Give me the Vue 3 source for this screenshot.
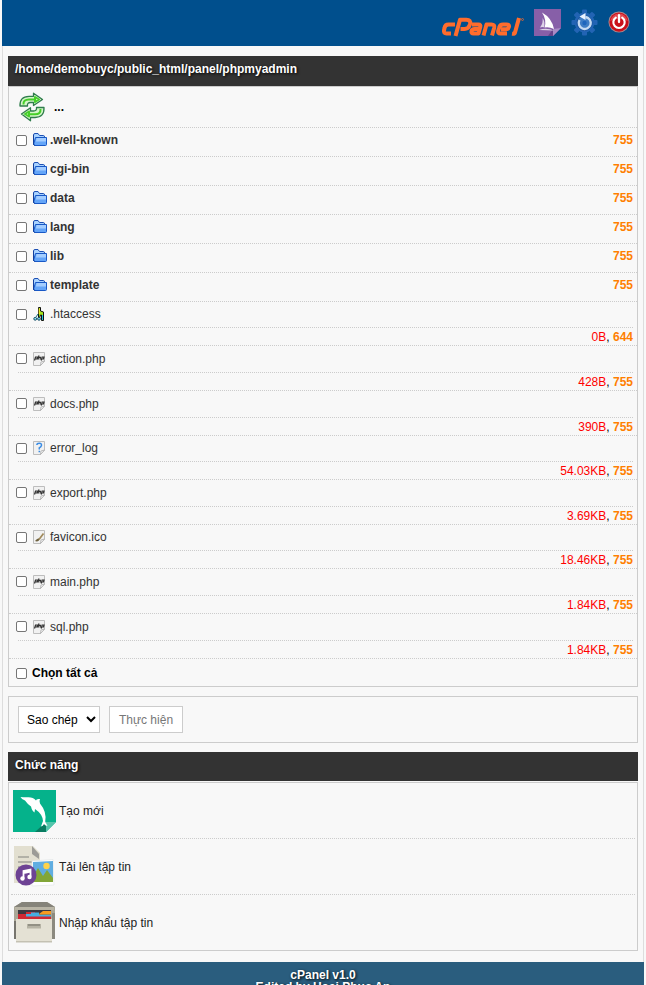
<script setup>
import { ref, watch } from 'vue'

const path = '/home/demobuyc/public_html/panel/phpmyadmin'
const entries = [
  { name: '.well-known', icon: 'folder', mode: '755' },
  { name: 'cgi-bin', icon: 'folder', mode: '755' },
  { name: 'data', icon: 'folder', mode: '755' },
  { name: 'lang', icon: 'folder', mode: '755' },
  { name: 'lib', icon: 'folder', mode: '755' },
  { name: 'template', icon: 'folder', mode: '755' },
  { name: '.htaccess', icon: 'config', size: '0B', mode: '644' },
  { name: 'action.php', icon: 'php', size: '428B', mode: '755' },
  { name: 'docs.php', icon: 'php', size: '390B', mode: '755' },
  { name: 'error_log', icon: 'unknown', size: '54.03KB', mode: '755' },
  { name: 'export.php', icon: 'php', size: '3.69KB', mode: '755' },
  { name: 'favicon.ico', icon: 'image', size: '18.46KB', mode: '755' },
  { name: 'main.php', icon: 'php', size: '1.84KB', mode: '755' },
  { name: 'sql.php', icon: 'php', size: '1.84KB', mode: '755' },
]
const selected = ref([])
const all = ref(false)
const action = ref('Sao chép')
watch(all, (on) => { selected.value = on ? entries.map((e) => e.name) : [] })
</script>

<template>
  <div class="page">
    <header class="top">
      <a href="#" class="brand" aria-label="cPanel">
        <svg width="84" height="20" viewBox="0 0 84 20" fill="none" stroke="#ff6c2c" stroke-width="4" stroke-linejoin="round">
          <path d="M15 7.500H8.500Q5 7.500 4.500 11L4 13.500Q3.500 16.500 6.500 16.500H11" />
          <path d="M15.500 19L20 2.800H26.500Q31 2.800 30 7L29.700 8Q28.500 12 24.500 12H20.500" />
          <path d="M32 7.500H38.500Q41 7.500 40.300 10L38.500 16.500H33.500Q31 16.500 31.500 14.200Q32 12 34.500 12H39" />
          <path d="M43.500 18.500L46.500 7.500H51.500Q55 7.500 54.200 10.700L52 18.500" />
          <path d="M67 16.500H60.500Q57.500 16.500 58.300 13.500L59.200 10.500Q60 7.500 63 7.500H66.500Q69.500 7.500 69 9.800Q68.400 12.200 66 12.200H61" />
          <path d="M79 1L75 15.500Q74.500 17 72 16.700" />
          <circle cx="82.500" cy="2.500" r="1" stroke-width=".7" />
        </svg>
      </a>
      <a href="#" aria-label="phpMyAdmin">
        <svg width="27" height="27" viewBox="0 0 27 27">
          <path d="M0 0H27V19L19 27H0Z" fill="#875fa8" />
          <path d="M27 19L19 27V20Z" fill="#a98bc5" /><path d="M19 20L14 27H19Z" fill="#66438a" />
          <path d="M8 3.500Q18 9 20 20Q15 17.500 10.500 18.500Q13 11 8 3.500Z" fill="#fff" />
          <path d="M8.500 9Q9.500 14 6 18.500Q8 17.500 10 18.300Q11.500 13 8.500 9ZM5 21Q12 18.500 20 21.500Q13 21 5 21Z" fill="#ded4e8" />
        </svg>
      </a>
      <a href="#" aria-label="Cài đặt">
        <svg width="27" height="27" viewBox="0 0 27 27">
          <g fill="#2264b4">
            <rect v-for="n in 4" :key="n" x="11" y="0.500" width="5" height="26" rx="1" :transform="`rotate(${n * 45} 13.500 13.500)`" />
            <circle cx="13.500" cy="13.500" r="10" />
          </g>
          <circle cx="13.500" cy="14" r="7.500" fill="#3f7dc5" stroke="#1c549b" />
          <path d="M8.500 11A6 6 0 1 0 14.500 8" fill="none" stroke="#c6dbf2" stroke-width="2.300" />
          <path d="M8.500 7.500L14.500 4V11Z" fill="#e8f2ff" /><circle cx="13.500" cy="14" r="2.200" fill="#1f66bd" />
        </svg>
      </a>
      <a href="#" aria-label="Đăng xuất">
        <svg width="22" height="22" viewBox="0 0 24 24">
          <circle cx="12" cy="12" r="11.500" fill="#a8898f" /><circle cx="12" cy="12" r="10.500" fill="#c9101a" />
          <path d="M2.500 11A9.600 9.600 0 0 1 21.500 11Q12 6 2.500 11Z" fill="#e0454c" />
          <path d="M8.500 7.200A6.200 6.200 0 1 0 15.500 7.200" fill="none" stroke="#fff" stroke-width="2.300" stroke-linecap="round" />
          <path d="M12 4.500V12" stroke="#fff" stroke-width="2.500" stroke-linecap="round" />
        </svg>
      </a>
    </header>

    <main class="body">
      <section>
        <h1 class="title">{{ path }}</h1>
        <ul class="panel files">
          <li class="up">
            <a href="#">
              <svg width="28" height="30" viewBox="0 0 28 30" fill="#d5f5c9" stroke="#2f7d4c" stroke-width="1.300" stroke-linejoin="round">
                <path d="M2 14Q1.500 4.500 11 4.300H15.500V1.200L24.500 7.500L15.500 13.500V10.500H12.500Q9 10.500 9.500 14Z" />
                <path d="M26 15.500Q26.500 25.300 17 25.500H12.500V28.800L3.500 22L12.500 15.800V19H15.500Q19 19 18.500 15.500Z" />
                <path d="M5.500 12.500Q5 7.500 11 7.500H17V5L21 7.500L17 10V7.500M22.500 17Q23 22.200 17 22.200H11V24.500L7 22L11 19.500V22" fill="none" stroke="#45cf29" stroke-width="2" />
              </svg>
              <b>...</b>
            </a>
          </li>
          <li v-for="e in entries" :key="e.name" :class="e.size ? 'file' : 'dir'">
            <div class="name">
              <input v-model="selected" type="checkbox" :value="e.name" :aria-label="e.name">
              <svg v-if="e.icon === 'folder'" class="icon" width="16" height="16" viewBox="0 0 16 16">
                <path d="M1.500 12.500V3Q1.500 1.500 3 1.500H6L7.500 3.500H11.500Q12.500 3.500 12.500 5V7" fill="#a8d2ff" stroke="#1d50b4" />
                <path d="M1.500 12.500L3.500 5.500H14.500V12.500Q14.500 13.500 13.500 13.500H3Z" fill="#64a5f8" stroke="#1858c6" />
                <path d="M4.500 6H14V9.500H4Z" fill="#a3cdff" />
                <path d="M1.500 3V12.500L3 13.500" fill="none" stroke="#123f9c" />
              </svg>
              <svg v-else-if="e.icon === 'config'" class="icon" width="16" height="16" viewBox="0 0 16 16">
                <path d="M6.500 1.500H8.500V5L11.500 6V14.500H9.500V9H8.500L7.500 12H6.500Z" fill="#a5e51d" stroke="#111" />
                <path d="M7.200 2.500V8" stroke="#ffe92b" /><path d="M10.500 9V14" stroke="#20c3da" />
                <circle cx="3.200" cy="12.800" r="1.400" fill="#8de9f7" stroke="#124860" /><circle cx="7" cy="12.800" r="1.400" fill="#8de9f7" stroke="#124860" />
                <path d="M4 11L6 8" stroke="#1a7185" />
              </svg>
              <svg v-else class="icon" :class="e.icon" width="16" height="16" viewBox="0 0 16 16">
                <path d="M1.500 1.500H12.500V10L8.500 14.500H1.500Z" fill="#f1f1f1" stroke="#bdbdbd" /><path d="M8.500 14.500L9 11L12.500 10Z" fill="#fff" stroke="#aaa" stroke-width=".8" />
                <path v-if="e.icon === 'php'" d="M2.500 9.500L3.500 6H5.500L5 8H3M7 4.500L6 8.500M6.700 6.300H8.500L8 8.500M9.200 9.500L10.200 6H12L11.500 8H9.700" fill="none" stroke="#333" stroke-width="1.200" />
                <path v-if="e.icon === 'unknown'" d="M4.800 5Q5 3.200 7.300 3.200Q9.700 3.200 9.500 5.300Q9.200 6.800 7.300 7.800V9.500M7.300 10.700V12.300" fill="none" stroke="#3a8ce4" stroke-width="1.500" />
                <g v-if="e.icon === 'image'"><path d="M3 12Q4.500 9.500 8 9L7 11.500Q5 13 3 12Z" fill="#6f623f" /><path d="M7 10.500L11.500 4.500" stroke="#a08a5c" stroke-width="1.700" /></g>
              </svg>
              <a href="#">{{ e.name }}</a>
              <a v-if="!e.size" href="#" class="mode end">{{ e.mode }}</a>
            </div>
            <div v-if="e.size" class="meta"><span class="size">{{ e.size }}</span>, <a href="#" class="mode">{{ e.mode }}</a></div>
          </li>
          <li class="all">
            <label class="name"><input v-model="all" type="checkbox"> <b>Chọn tất cả</b></label>
          </li>
        </ul>
      </section>

      <form class="panel bulk" @submit.prevent>
        <select v-model="action" aria-label="Thao tác">
          <option>Sao chép</option>
          <option>Di chuyển</option>
          <option>Xóa</option>
        </select>
        <button type="submit">Thực hiện</button>
      </form>

      <section class="functions">
        <h2 class="title">Chức năng</h2>
        <ul class="panel menu">
          <li>
            <a href="#">
              <svg width="44" height="44" viewBox="0 0 44 44">
                <path d="M0 1H43V33L33 43H0Z" fill="#05b28b" /><path d="M43 33L33 43V33Z" fill="#55c5ab" /><path d="M33 33V43H22Z" fill="#087b60" />
                <path d="M7.500 8Q12 8.500 15 8.200Q20 8 23 11.500Q23 9.500 27 10Q26 12 27 14.500Q34 23 32.200 32.500L34.500 37Q31.500 36.500 31 35Q30 37 28 37.500L30 32Q29.500 25 22 20L21.500 23.500Q19 22 18 17.500Q14 14.500 12 11.500Q9 11 7.500 8Z" fill="#fff" />
              </svg>
              Tạo mới
            </a>
          </li>
          <li>
            <a href="#">
              <svg width="44" height="44" viewBox="0 0 44 44">
                <path d="M1 1H20L27 8V38H1Z" fill="#e2dfd0" /><path d="M19 1L26 9V14L19 9Z" fill="#9c9b96" />
                <path d="M5 12H16M5 17H21M5 22H18M5 27H17" stroke="#a3a299" stroke-width="1.600" />
                <path d="M19 16L40 14.500L41 40L19 41Z" fill="#fff" stroke="#e1e5e7" stroke-width=".7" />
                <path d="M20 17L40 16V36H20Z" fill="#60ade1" /><circle cx="33.500" cy="21" r="3.200" fill="#ffd24a" />
                <path d="M19 33L25 23L30 31L34 25L40 33V37H19Z" fill="#82a638" />
                <circle cx="13" cy="30" r="10.500" fill="#6d4294" />
                <path d="M10.500 33V26L17.500 24.500V31.500M10.500 28L17.500 26.500" fill="none" stroke="#fff" stroke-width="1.800" /><circle cx="9.500" cy="33.500" r="2.200" fill="#fff" /><circle cx="16.500" cy="32" r="2.200" fill="#fff" />
              </svg>
              Tải lên tập tin
            </a>
          </li>
          <li>
            <a href="#">
              <svg width="44" height="44" viewBox="0 0 44 44">
                <path d="M1 6L9 1H34L42 6V38H39V41H4V38H1Z" fill="#aaa797" /><path d="M1 6L9 1H34L42 6Z" fill="#85837a" />
                <path d="M2 6H41V9H2Z" fill="#b9b5a6" /><path d="M5 9H38V18H5Z" fill="#3c3941" />
                <path d="M5 13H13V11H22V15H38V18H5Z" fill="#cf2934" /><path d="M13 13H18V11.500H26V13.500H38V15.500H13Z" fill="#46aee0" /><path d="M26 13L30 10H38V13.500H26Z" fill="#f79b20" />
                <path d="M3 18H39V40H3Z" fill="#e4e1d4" /><path d="M1 20H3V38H1Z" fill="#77756e" /><path d="M39 12H42V38H39Z" fill="#8c8a80" />
                <path d="M14 23H28V27.500H14Z" fill="#b6b3a5" /><path d="M15 23H27V25H15Z" fill="#929084" /><path d="M3 40H39V41.500H3Z" fill="#c4c1b3" />
              </svg>
              Nhập khẩu tập tin
            </a>
          </li>
        </ul>
      </section>
    </main>

    <footer class="foot">
      <div>cPanel v1.0</div>
      <div>Edited by Hoai Phuc An</div>
    </footer>
  </div>
</template>

<style>
body { background: #f8f8f8; }
html { scrollbar-width: none; }
</style>

<style scoped>
.page { margin: 0 2px; font: 12px/14px "Liberation Sans", Arial, sans-serif; color: #000; height: 100vh; overflow: hidden; display: flex; flex-direction: column; }
a { color: #333; text-decoration: none; }
svg { display: block; flex: none; }
.top { flex: none; height: 46px; box-sizing: border-box; background: #004f8d; display: flex; align-items: center; justify-content: flex-end; gap: 10px; padding: 0 14px 2px 0; }
.brand { padding-top: 10px; }
.body { flex: none; border: 1px solid #ddd; border-width: 0 1px; padding: 10px 5px 11px; display: flex; flex-direction: column; gap: 9px; }
.title { margin: 0; padding: 6px 7px 10px; background: #333; color: #fff; font-size: 12px; line-height: 14px; text-shadow: 1px 1px 3px #000; }
.functions .title { padding-bottom: 9px; margin-bottom: 1px; }
.panel { margin: 0; padding: 0; border: 1px solid #ccc; list-style: none; }
.files li + li, .menu li + li { border-top: 1px dotted #ccc; }
.up a { display: flex; align-items: center; gap: 8px; padding: 5px 9px; color: #000; }
.name { display: flex; align-items: center; padding: 0 4px 0 7px; }
.name input { width: 11px; height: 11px; margin: 0 5px 0 0; flex: none; appearance: none; background: #fff; border: 1px solid #767676; border-radius: 2px; }
.name input:checked { background: #0075ff; }
.icon { margin-right: 2px; }
.php { padding-top: 1px; }
.end { margin-left: auto; }
.dir .name { padding-top: 4px; padding-bottom: 8px; font-weight: bold; }
.file .name { padding-top: 4px; padding-bottom: 5px; }
.meta { margin: 0 4px 0 9px; padding-top: 2px; line-height: 15px; border-top: 1px dotted #ccc; text-align: right; }
.size { color: #f00; }
.mode { color: #ff7f00; font-weight: bold; }
.all .name { padding-top: 7px; padding-bottom: 6px; }
.bulk { display: flex; gap: 9px; padding: 9px; }
select, button { height: 27px; box-sizing: border-box; border: 1px solid #ccc; border-radius: 0; background-color: #fff; font: 12px "Liberation Sans", Arial, sans-serif; }
select { width: 82px; padding: 0 4px; color: #000; }
button { padding: 0 9px; color: #777; }
.menu { padding: 0 2px; }
.menu a { display: flex; align-items: center; gap: 2px; padding: 6px 2px 5px; color: #222; }
.foot { flex: none; background: #2a5d7e; color: #fff; font-weight: bold; text-align: center; line-height: 12px; padding: 7px 0 20px; text-shadow: 1px 1px 3px #000; }
</style>
